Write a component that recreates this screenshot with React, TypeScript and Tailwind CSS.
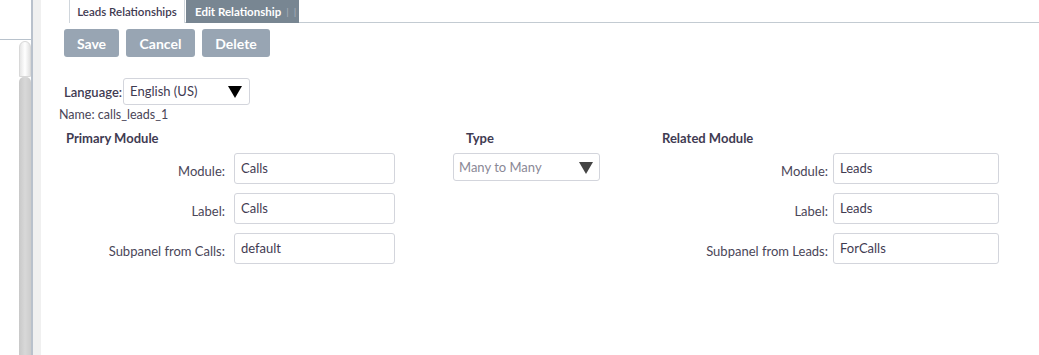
import React from "react";

const font = { fontFamily: "Lato, 'Open Sans', sans-serif" };

function Field({ label, value, labelW, pr, inputW }: { label: string; value: string; labelW: string; pr: string; inputW: string }) {
  return (
    <div className="flex items-center h-[40px]">
      <div className={`${labelW} ${pr} text-right pt-[6px] text-[13px] text-[#4a4658] whitespace-nowrap`}>{label}</div>
      <div className={`${inputW} h-[31px] border border-[#d3d5dc] rounded-[3px] pl-[6px] pt-[5px] text-[13px] text-[#3f3b52] bg-white`}>
        {value}
      </div>
    </div>
  );
}

export default function App() {
  return (
    <div className="w-[1039px] h-[355px] bg-white flex overflow-hidden" style={font}>
      {/* left strip */}
      <div className="w-[31px] flex flex-col">
        <div className="h-[40px] border-b border-[#b8c2cc]" />
        <div className="flex-1 flex justify-end">
          <div className="w-[12px] flex flex-col mt-[1px]">
            <div className="h-[36px] rounded-t-[6px] bg-gradient-to-r from-[#e6e6e6] via-[#ffffff] to-[#e2e2e2] border border-[#d8d8d8]" />
            <div className="flex-1 rounded-t-[5px] bg-gradient-to-r from-[#c8c8c8] via-[#d8d8d8] to-[#cccccc]" />
          </div>
        </div>
      </div>
      <div className="w-[2px] bg-[#b9c1cc]" />
      <div className="w-[8px] bg-[#f0f0f0]" />
      {/* main */}
      <div className="flex-1 pl-[23px] text-[#3f3b52]">
        <div className="ml-[5px] flex h-[23px] border-b border-[#c3cbd2]">
          <div className="w-[116px] h-[23px] border-l border-r border-[#d0d6dc] bg-white text-[11.5px] font-semibold text-[#3f3b52] flex items-center justify-center whitespace-nowrap">
            Leads Relationships
          </div>
          <div className="ml-[1px] h-[23px] bg-[#788692] text-[11.5px] font-bold text-white flex items-center pl-[9px] pr-[3px] whitespace-nowrap">
            Edit Relationship
            <span className="ml-[5px] text-[#a9b2bb] font-normal text-[10px]">|</span>
            <span className="ml-[5px] text-[#a9b2bb] font-normal text-[10px]">|</span>
          </div>
        </div>
        <div className="flex gap-[7px] mt-[6px]">
          <div className="w-[55px] h-[28px] rounded-[3px] bg-[#98a5b3] text-white font-bold text-[14px] flex items-center justify-center">Save</div>
          <div className="w-[69px] h-[28px] rounded-[3px] bg-[#98a5b3] text-white font-bold text-[14px] flex items-center justify-center">Cancel</div>
          <div className="w-[68px] h-[28px] rounded-[3px] bg-[#98a5b3] text-white font-bold text-[14px] flex items-center justify-center">Delete</div>
        </div>
        <div className="flex items-center mt-[21px]">
          <span className="text-[13px] font-semibold text-[#3f3b52] mr-[1px] pt-[2px]">Language:</span>
          <div className="w-[127px] h-[27px] border border-[#d3d5dc] rounded-[3px] flex items-center justify-between pl-[6px] pr-[7px] text-[13px] text-[#3f3b52]">
            <span>English (US)</span>
            <svg width="14" height="12" viewBox="0 0 14 12"><path d="M0 0 L14 0 L7 12 Z" fill="#000" /></svg>
          </div>
        </div>
        <div className="-ml-[5px] mt-[1px] text-[12.5px] text-[#4a4658]">Name: calls_leads_1</div>
        <div className="flex mt-[4px]">
          <div className="w-[389px]">
            <div className="ml-[2px] text-[13px] font-bold text-[#3f3b52] h-[18px]">Primary Module</div>
            <div className="mt-[2px]">
              <Field label="Module:" value="Calls" labelW="w-[170px]" pr="pr-[9px]" inputW="w-[161px]" />
              <Field label="Label:" value="Calls" labelW="w-[170px]" pr="pr-[9px]" inputW="w-[161px]" />
              <Field label="Subpanel from Calls:" value="default" labelW="w-[170px]" pr="pr-[9px]" inputW="w-[161px]" />
            </div>
          </div>
          <div className="w-[209px]">
            <div className="ml-[13px] text-[13px] font-bold text-[#3f3b52] h-[18px]">Type</div>
            <div className="mt-[6px] w-[147px] h-[28px] border border-[#d3d5dc] rounded-[3px] flex items-center justify-between pl-[5px] pr-[6px] pt-[2px] text-[13px] text-[#8a8896]">
              <span>Many to Many</span>
              <svg width="14" height="12" viewBox="0 0 14 12"><path d="M0 0 L14 0 L7 12 Z" fill="#444" /></svg>
            </div>
          </div>
          <div>
            <div className="text-[13px] font-bold text-[#3f3b52] h-[18px]">Related Module</div>
            <div className="mt-[2px]">
              <Field label="Module:" value="Leads" labelW="w-[171px]" pr="pr-[5px]" inputW="w-[166px]" />
              <Field label="Label:" value="Leads" labelW="w-[171px]" pr="pr-[5px]" inputW="w-[166px]" />
              <Field label="Subpanel from Leads:" value="ForCalls" labelW="w-[171px]" pr="pr-[5px]" inputW="w-[166px]" />
            </div>
          </div>
        </div>
      </div>
    </div>
  );
}
